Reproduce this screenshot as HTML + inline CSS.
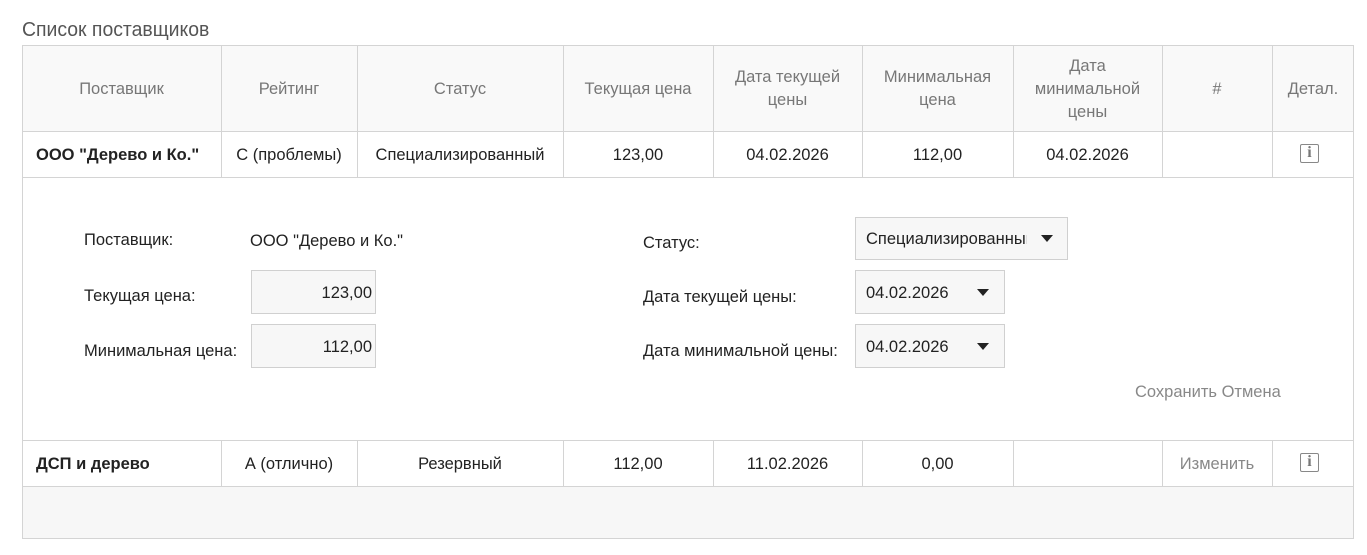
<!DOCTYPE html>
<html><head><meta charset="utf-8"><style>
body{margin:0;width:1367px;height:555px;background:#fff;font-family:"Liberation Sans","DejaVu Sans",sans-serif;font-size:16.5px;color:#222;position:relative;overflow:hidden}
.a{position:absolute}
.title{left:22px;top:19px;font-size:20px;color:#555;transform:scaleX(0.97);transform-origin:left}
.tbl{left:22px;top:45px;width:1332px;height:494px;border:1px solid #d4d4d4;box-sizing:border-box}
.hl{position:absolute;left:22px;width:1332px;height:1px;background:#d4d4d4}
.vl{position:absolute;width:1px;background:#d4d4d4}
.c{position:absolute;display:flex;align-items:center;justify-content:center;text-align:center;line-height:23px;padding-top:2px;box-sizing:border-box;white-space:nowrap}
.h{color:#777}
.b{font-weight:bold;justify-content:flex-start;padding-left:14px}
.inp{position:absolute;border:1px solid #d0d0d0;background:#f7f7f7;box-sizing:border-box;display:flex;align-items:center;padding-top:2px}
.arr{position:absolute;width:0;height:0;border-left:6px solid transparent;border-right:6px solid transparent;border-top:7px solid #222}
.info{position:absolute;width:19px;height:19px;border:1.5px solid #888;border-radius:2px;box-sizing:border-box;font-family:"Liberation Serif",serif;font-size:16px;font-weight:bold;color:#777;text-align:center;line-height:16px}
.lbl{position:absolute;line-height:20px}
</style></head><body>
<div class="a title">Список поставщиков</div>
<div class="a" style="left:22px;top:45px;width:1332px;height:86px;background:#f9f9f9"></div>
<div class="a" style="left:22px;top:486px;width:1332px;height:53px;background:#f7f7f7"></div>
<div class="a tbl"></div>
<div class="hl" style="top:131px"></div>
<div class="hl" style="top:177px"></div>
<div class="hl" style="top:440px"></div>
<div class="hl" style="top:486px"></div>
<div class="vl" style="left:221px;top:45px;height:133px"></div>
<div class="vl" style="left:357px;top:45px;height:133px"></div>
<div class="vl" style="left:563px;top:45px;height:133px"></div>
<div class="vl" style="left:713px;top:45px;height:133px"></div>
<div class="vl" style="left:862px;top:45px;height:133px"></div>
<div class="vl" style="left:1013px;top:45px;height:133px"></div>
<div class="vl" style="left:1162px;top:45px;height:133px"></div>
<div class="vl" style="left:1272px;top:45px;height:133px"></div>
<div class="vl" style="left:221px;top:440px;height:47px"></div>
<div class="vl" style="left:357px;top:440px;height:47px"></div>
<div class="vl" style="left:563px;top:440px;height:47px"></div>
<div class="vl" style="left:713px;top:440px;height:47px"></div>
<div class="vl" style="left:862px;top:440px;height:47px"></div>
<div class="vl" style="left:1013px;top:440px;height:47px"></div>
<div class="vl" style="left:1162px;top:440px;height:47px"></div>
<div class="vl" style="left:1272px;top:440px;height:47px"></div>

<div class="c h" style="left:22px;top:45px;width:199px;height:86px">Поставщик</div>
<div class="c h" style="left:221px;top:45px;width:136px;height:86px">Рейтинг</div>
<div class="c h" style="left:357px;top:45px;width:206px;height:86px">Статус</div>
<div class="c h" style="left:563px;top:45px;width:150px;height:86px">Текущая цена</div>
<div class="c h" style="left:713px;top:45px;width:149px;height:86px">Дата текущей<br>цены</div>
<div class="c h" style="left:862px;top:45px;width:151px;height:86px">Минимальная<br>цена</div>
<div class="c h" style="left:1013px;top:45px;width:149px;height:86px">Дата<br>минимальной<br>цены</div>
<div class="c h" style="left:1162px;top:45px;width:110px;height:86px">#</div>
<div class="c h" style="left:1272px;top:45px;width:82px;height:86px">Детал.</div>

<div class="c b" style="left:22px;top:131px;width:199px;height:46px">ООО "Дерево и Ко."</div>
<div class="c" style="left:221px;top:131px;width:136px;height:46px">С (проблемы)</div>
<div class="c" style="left:357px;top:131px;width:206px;height:46px">Специализированный</div>
<div class="c" style="left:563px;top:131px;width:150px;height:46px">123,00</div>
<div class="c" style="left:713px;top:131px;width:149px;height:46px">04.02.2026</div>
<div class="c" style="left:862px;top:131px;width:151px;height:46px">112,00</div>
<div class="c" style="left:1013px;top:131px;width:149px;height:46px">04.02.2026</div>
<div class="info" style="left:1300px;top:144px">i</div>

<div class="lbl" style="left:84px;top:230px">Поставщик:</div>
<div class="lbl" style="left:250px;top:231px">ООО "Дерево и Ко."</div>
<div class="lbl" style="left:84px;top:286px">Текущая цена:</div>
<div class="inp" style="left:251px;top:270px;width:125px;height:44px;justify-content:flex-end;padding-right:3px">123,00</div>
<div class="lbl" style="left:84px;top:341px">Минимальная цена:</div>
<div class="inp" style="left:251px;top:324px;width:125px;height:44px;justify-content:flex-end;padding-right:3px">112,00</div>

<div class="lbl" style="left:643px;top:233px">Статус:</div>
<div class="inp" style="left:855px;top:217px;width:213px;height:43px;padding-left:10px"><span style="width:161px;overflow:hidden;white-space:nowrap;display:inline-block">Специализированный</span></div>
<div class="arr" style="left:1041px;top:235px"></div>
<div class="lbl" style="left:643px;top:287px">Дата текущей цены:</div>
<div class="inp" style="left:855px;top:270px;width:150px;height:44px;padding-left:10px">04.02.2026</div>
<div class="arr" style="left:977px;top:289px"></div>
<div class="lbl" style="left:643px;top:341px">Дата минимальной цены:</div>
<div class="inp" style="left:855px;top:324px;width:150px;height:44px;padding-left:10px">04.02.2026</div>
<div class="arr" style="left:977px;top:343px"></div>
<div class="lbl" style="left:1135px;top:382px;color:#888">Сохранить Отмена</div>

<div class="c b" style="left:22px;top:440px;width:199px;height:46px">ДСП и дерево</div>
<div class="c" style="left:221px;top:440px;width:136px;height:46px">А (отлично)</div>
<div class="c" style="left:357px;top:440px;width:206px;height:46px">Резервный</div>
<div class="c" style="left:563px;top:440px;width:150px;height:46px">112,00</div>
<div class="c" style="left:713px;top:440px;width:149px;height:46px">11.02.2026</div>
<div class="c" style="left:862px;top:440px;width:151px;height:46px">0,00</div>
<div class="c" style="left:1162px;top:440px;width:110px;height:46px;color:#888">Изменить</div>
<div class="info" style="left:1300px;top:453px">i</div>
</body></html>
